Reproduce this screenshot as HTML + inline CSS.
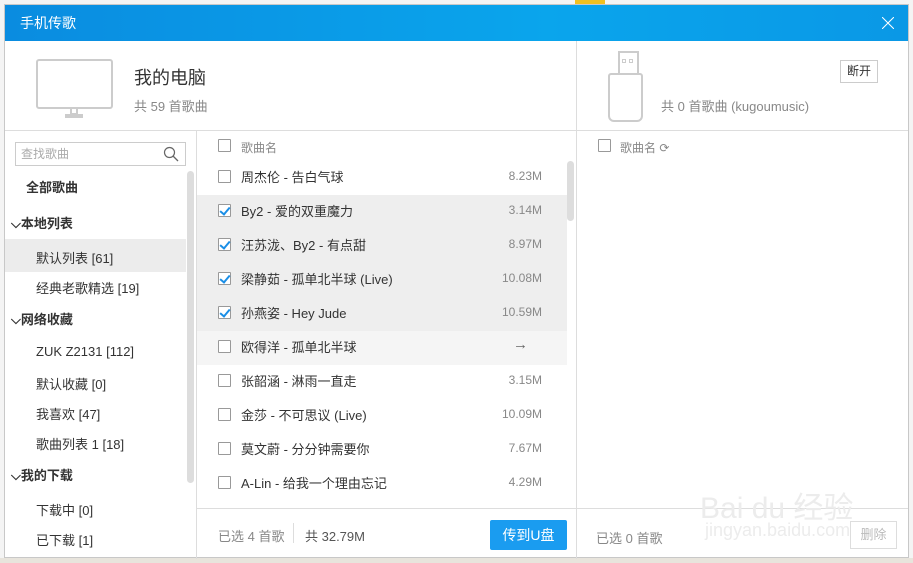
<!DOCTYPE html>
<html><head><meta charset="utf-8"><style>
*{margin:0;padding:0;box-sizing:border-box}
body{width:913px;height:563px;overflow:hidden;background:#f4f4f4;font-family:"Liberation Sans","Noto Sans CJK SC",sans-serif;position:relative;color:#333}
.a{position:absolute}
.dlg{left:4px;top:4px;width:905px;height:554px;background:#fff;border:1px solid #c8c8c8;}
.tb{left:0;top:0;width:903px;height:36px;background:linear-gradient(90deg,#0a8ce0,#0aa5ec 60%,#0a98e6);color:#fff;font-size:14px;line-height:36px;padding-left:15px}
.t{font-size:13px;white-space:nowrap}
.cb{width:13px;height:13px;border:1px solid #999;background:#fff;border-radius:1px}
.cb.on::after{content:"";position:absolute;left:3px;top:0px;width:4px;height:8px;border:solid #1a8ee6;border-width:0 2px 2px 0;transform:rotate(40deg)}
.sz{color:#888;font-size:12px;text-align:right;width:60px}
</style></head><body>
<div class="a" style="left:575px;top:0;width:30px;height:4px;background:#f0c020"></div>
<div class="a" style="left:0;top:558px;width:913px;height:5px;background:#e8e4dc"></div>
<div class="a dlg">
<div class="a tb">手机传歌<svg class="a" style="right:14px;top:12px" width="12" height="12"><path d="M0 0L12 12M12 0L0 12" stroke="#fff" stroke-width="1"/></svg></div>
<div class="a" style="left:0;top:125px;width:903px;height:1px;background:#ddd"></div>
<div class="a" style="left:571px;top:36px;width:1px;height:518px;background:#ddd"></div>
<div class="a" style="left:31px;top:54px;width:77px;height:50px;border:2px solid #ccc;border-radius:3px"></div>
<div class="a" style="left:65px;top:104px;width:8px;height:6px;border:2px solid #ccc;border-top:none"></div>
<div class="a" style="left:60px;top:109px;width:18px;height:3px;border:2px solid #ccc"></div>
<div class="a" style="left:129px;top:59px;font-size:18px;color:#333">我的电脑</div>
<div class="a t" style="left:129px;top:91px;color:#888;font-size:13px">共 59 首歌曲</div>
<div class="a" style="left:613px;top:46px;width:21px;height:24px;border:2px solid #ccc;border-bottom:none"></div>
<div class="a" style="left:617px;top:54px;width:4px;height:4px;border:1px solid #ccc"></div>
<div class="a" style="left:624px;top:54px;width:4px;height:4px;border:1px solid #ccc"></div>
<div class="a" style="left:603px;top:68px;width:35px;height:49px;border:2px solid #ccc;border-radius:3px 3px 6px 6px"></div>
<div class="a t" style="left:656px;top:91px;color:#888">共 0 首歌曲 (kugoumusic)</div>
<div class="a" style="left:835px;top:55px;width:38px;height:23px;border:1px solid #ccc;font-size:12px;text-align:center;line-height:21px">断开</div>
<div class="a" style="left:191px;top:126px;width:1px;height:428px;background:#ddd"></div>
<div class="a" style="left:10px;top:137px;width:171px;height:24px;border:1px solid #ccc;font-size:12px;color:#aaa;line-height:22px;padding-left:5px">查找歌曲</div>
<svg class="a" style="left:158px;top:141px" width="16" height="16"><circle cx="6.5" cy="6.5" r="5" stroke="#666" fill="none" stroke-width="1.2"/><line x1="10" y1="10" x2="15" y2="15" stroke="#666" stroke-width="1.3"/></svg>
<div class="a" style="left:182px;top:166px;width:7px;height:312px;background:#ddd;border-radius:4px"></div>
<div class="a" style="left:0;top:234px;width:181px;height:33px;background:#ececec"></div>
<div class="a t" style="left:21px;top:172px;font-weight:bold">全部歌曲</div>
<div class="a t" style="left:6px;top:208px;font-weight:bold">⌵本地列表</div>
<div class="a t" style="left:31px;top:243px">默认列表 [61]</div>
<div class="a t" style="left:31px;top:273px">经典老歌精选 [19]</div>
<div class="a t" style="left:6px;top:304px;font-weight:bold">⌵网络收藏</div>
<div class="a t" style="left:31px;top:339px">ZUK Z2131 [112]</div>
<div class="a t" style="left:31px;top:369px">默认收藏 [0]</div>
<div class="a t" style="left:31px;top:399px">我喜欢 [47]</div>
<div class="a t" style="left:31px;top:429px">歌曲列表 1 [18]</div>
<div class="a t" style="left:6px;top:460px;font-weight:bold">⌵我的下载</div>
<div class="a t" style="left:31px;top:495px">下载中 [0]</div>
<div class="a t" style="left:31px;top:525px">已下载 [1]</div>
<div class="a" style="left:192px;top:190px;width:370px;height:136px;background:#eeeeee"></div>
<div class="a" style="left:192px;top:326px;width:370px;height:34px;background:#f5f5f5"></div>
<div class="a" style="left:562px;top:156px;width:7px;height:60px;background:#ddd;border-radius:4px"></div>
<div class="a cb" style="left:213px;top:134px"></div><div class="a t" style="left:236px;top:134px;color:#888;font-size:12px">歌曲名</div>
<div class="a" style="left:192px;top:503px;width:379px;height:1px;background:#ddd"></div>
<div class="a" style="left:572px;top:503px;width:331px;height:1px;background:#ddd"></div>
<div class="a t" style="left:213px;top:521px;color:#888">已选 4 首歌</div>
<div class="a" style="left:288px;top:518px;width:1px;height:20px;background:#ddd"></div>
<div class="a t" style="left:300px;top:521px;color:#555">共 32.79M</div>
<div class="a" style="left:485px;top:515px;width:77px;height:30px;background:#1a9cf0;border-radius:2px;color:#fff;font-size:14px;text-align:center;line-height:30px">传到U盘</div>
<div class="a cb" style="left:593px;top:134px"></div><div class="a t" style="left:615px;top:134px;color:#888;font-size:12px">歌曲名 ⟳</div>
<div class="a t" style="left:591px;top:523px;color:#888">已选 0 首歌</div>
<div class="a" style="left:695px;top:478px;font-size:30px;color:#ececec">Bai du 经验</div>
<div class="a" style="left:700px;top:515px;font-size:18px;color:#ececec">jingyan.baidu.com</div>
<div class="a" style="left:845px;top:516px;width:47px;height:28px;border:1px solid #ddd;color:#bbb;font-size:13px;text-align:center;line-height:26px">删除</div>
</div>
<div id="rows"></div>
<script>
var r=[["周杰伦 - 告白气球","8.23M",0],["By2 - 爱的双重魔力","3.14M",1],["汪苏泷、By2 - 有点甜","8.97M",1],["梁静茹 - 孤单北半球 (Live)","10.08M",1],["孙燕姿 - Hey Jude","10.59M",1],["欧得洋 - 孤单北半球","→",0],["张韶涵 - 淋雨一直走","3.15M",0],["金莎 - 不可思议 (Live)","10.09M",0],["莫文蔚 - 分分钟需要你","7.67M",0],["A-Lin - 给我一个理由忘记","4.29M",0]];
var h="";r.forEach(function(x,i){var y=177+i*34;h+='<div class="a cb'+(x[2]?' on':'')+'" style="left:218px;top:'+(y-7)+'px"></div><div class="a t" style="left:241px;top:'+(y-10)+'px">'+x[0]+'</div><div class="a t sz" style="left:482px;top:'+(y-8)+'px;'+(x[1]=="→"?'font-size:15px;top:'+(y-11)+'px;color:#666;left:468px':'')+'">'+x[1]+'</div>';});
document.getElementById("rows").innerHTML=h;
</script>
</body></html>
